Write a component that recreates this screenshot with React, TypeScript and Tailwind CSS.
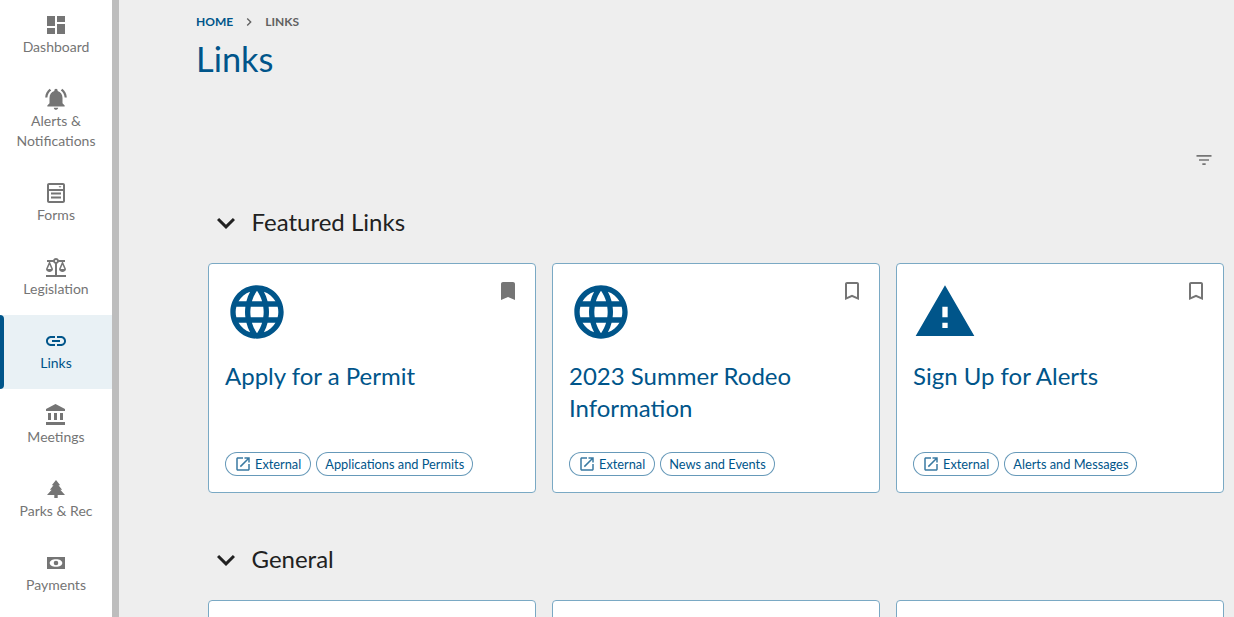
import React from "react";

const P = {
  dashboard: "M3 13h8V3H3v10zm0 8h8v-6H3v6zm10 0h8V11h-8v10zm0-18v6h8V3h-8z",
  bell: "M7.58 4.08L6.15 2.65C3.75 4.48 2.17 7.3 2.03 10.5h2c.15-2.65 1.51-4.97 3.55-6.42zm12.39 6.42h2c-.15-3.2-1.73-6.02-4.12-7.85l-1.42 1.43c2.02 1.45 3.39 3.77 3.54 6.42zM18 11c0-3.07-1.64-5.64-4.5-6.32V4c0-.83-.67-1.5-1.5-1.5s-1.5.67-1.5 1.5v.68C7.63 5.36 6 7.92 6 11v5l-2 2v1h16v-1l-2-2v-5zm-6 11c.14 0 .27-.01.4-.04.65-.14 1.18-.58 1.44-1.18.1-.24.15-.5.15-.78h-4c.01 1.1.9 2 2.01 2z",
  forms: "M5 2h14c1.1 0 2 .9 2 2v16c0 1.1-.9 2-2 2H5c-1.1 0-2-.9-2-2V4c0-1.1.9-2 2-2zm0 2v4h14V4H5zm0 6v10h14V10H5zm2 1.5h10v2H7v-2zm0 4h10v2H7v-2zM14.5 5.2h3l-1.5 1.6z",
  balance: "M13 8.83c.85-.3 1.53-.98 1.83-1.83H18l-3 7c0 1.66 1.57 3 3.5 3s3.5-1.34 3.5-3l-3-7h2V5h-6.17c-.41-1.17-1.52-2-2.83-2s-2.42.83-2.83 2H3v2h2l-3 7c0 1.66 1.57 3 3.5 3S9 15.66 9 14L6 7h3.17c.3.85.98 1.53 1.83 1.83V20H2v2h20v-2h-9V8.83zM20.37 14h-3.74l1.87-4.36L20.37 14zm-13 0H3.63L5.5 9.64 7.37 14zM12 7c-.55 0-1-.45-1-1 0-.55.45-1 1-1s1 .45 1 1c0 .55-.45 1-1 1z",
  link: "M3.9 12c0-1.71 1.39-3.1 3.1-3.1h4V7H7c-2.76 0-5 2.24-5 5s2.24 5 5 5h4v-1.9H7c-1.71 0-3.1-1.39-3.1-3.1zM8 13h8v-2H8v2zm9-6h-4v1.9h4c1.71 0 3.1 1.39 3.1 3.1s-1.39 3.1-3.1 3.1h-4V17h4c2.76 0 5-2.24 5-5s-2.24-5-5-5z",
  bank: "M4 10v7h3v-7H4zm6 0v7h3v-7h-3zM2 22h19v-3H2v3zm14-12v7h3v-7h-3zm-4.5-9L2 6v2h19V6l-9.5-5z",
  tree: "M12 3l4.2 5.2h-1.7l3.6 4.6h-1.8L21 18h-7.3v3h-3.4v-3H3l4.7-5.2H5.9l3.6-4.6H7.8z",
  money: "M3 6h18v12H3V6zm9 2.2c-3.6 0-6.3 1.6-6.3 3.8s2.7 3.8 6.3 3.8 6.3-1.6 6.3-3.8-2.7-3.8-6.3-3.8zM12 9.7a2.3 2.3 0 1 1 0 4.6 2.3 2.3 0 0 1 0-4.6z",
  globe: "M11.99 2C6.47 2 2 6.48 2 12s4.47 10 9.99 10C17.52 22 22 17.52 22 12S17.52 2 11.99 2zm6.93 6h-2.95c-.32-1.25-.78-2.45-1.38-3.56 1.84.63 3.37 1.91 4.33 3.56zM12 4.04c.83 1.2 1.48 2.53 1.91 3.96h-3.82c.43-1.43 1.08-2.76 1.91-3.96zM4.26 14C4.1 13.36 4 12.69 4 12s.1-1.36.26-2h3.38c-.08.66-.14 1.32-.14 2 0 .68.06 1.34.14 2H4.26zm.82 2h2.95c.32 1.25.78 2.45 1.38 3.56-1.84-.63-3.37-1.9-4.33-3.56zm2.95-8H5.08c.96-1.66 2.49-2.93 4.33-3.56C8.81 5.55 8.35 6.75 8.03 8zM12 19.96c-.83-1.2-1.48-2.53-1.91-3.96h3.82c-.43 1.43-1.08 2.76-1.91 3.96zM14.34 14H9.66c-.09-.66-.16-1.32-.16-2 0-.68.07-1.35.16-2h4.68c.09.65.16 1.32.16 2 0 .68-.07 1.34-.16 2zm.25 5.56c.6-1.11 1.06-2.31 1.38-3.56h2.95c-.96 1.65-2.49 2.93-4.33 3.56zM16.36 14c.08-.66.14-1.32.14-2 0-.68-.06-1.34-.14-2h3.38c.16.64.26 1.31.26 2s-.1 1.36-.26 2h-3.38z",
  warning: "M1 21h22L12 2 1 21zm12-3h-2v-2h2v2zm0-4h-2v-4h2v4z",
  bookmark: "M17 3H7c-1.1 0-1.99.9-1.99 2L5 21l7-3 7 3V5c0-1.1-.9-2-2-2z",
  bookmarkO: "M17 3H7c-1.1 0-2 .9-2 2v16l7-3 7 3V5c0-1.1-.9-2-2-2zm0 15l-5-2.18L7 18V5h10v13z",
  external: "M19 19H5V5h7V3H5c-1.11 0-2 .9-2 2v14c0 1.1.89 2 2 2h14c1.1 0 2-.9 2-2v-7h-2v7zM14 3v2h3.59l-9.83 9.83 1.41 1.41L19 6.41V10h2V3h-7z",
  filter: "M10 18h4v-2h-4v2zM3 6v2h18V6H3zm3 7h12v-2H6v2z",
  expand: "M16.59 8.59L12 13.17 7.41 8.59 6 10l6 6 6-6z",
  chevron: "M10 6L8.59 7.41 13.17 12l-4.58 4.59L10 18l6-6z",
};

function Icon({ d, className }: { d: string; className: string }) {
  return (
    <svg viewBox="0 0 24 24" fill="currentColor" fillRule="evenodd" className={className}>
      <path d={d} />
    </svg>
  );
}

const nav = [
  { icon: P.dashboard, label: ["Dashboard"] },
  { icon: P.bell, label: ["Alerts &", "Notifications"], large: true },
  { icon: P.forms, label: ["Forms"] },
  { icon: P.balance, label: ["Legislation"] },
  { icon: P.link, label: ["Links"], active: true },
  { icon: P.bank, label: ["Meetings"] },
  { icon: P.tree, label: ["Parks & Rec"] },
  { icon: P.money, label: ["Payments"] },
];

const cards = [
  { icon: P.globe, title: "Apply for a Permit", tag: "Applications and Permits", saved: true },
  { icon: P.globe, title: "2023 Summer Rodeo Information", tag: "News and Events" },
  { icon: P.warning, title: "Sign Up for Alerts", tag: "Alerts and Messages" },
];

function LinkCard({ c }: { c: (typeof cards)[number] }) {
  return (
    <div className="relative flex h-[230px] flex-col rounded-[4px] border border-[#7aa9c4] bg-white p-4">
      <button className="absolute right-[15px] top-[15px] text-[#757575]">
        <Icon d={c.saved ? P.bookmark : P.bookmarkO} className="h-6 w-6" />
      </button>
      <Icon d={c.icon} className="h-16 w-16 shrink-0 text-[#00558a]" />
      <div className="mt-4 pr-6 text-2xl leading-8 text-[#00558a]">{c.title}</div>
      <div className="mt-auto flex gap-[5px]">
        <span className="flex h-6 items-center rounded-full border border-[#00558a]/60 bg-white pl-2 pr-[9px] text-[12.8px] leading-none text-[#00558a]">
          <Icon d={P.external} className="mr-[3px] h-[18px] w-[18px] text-[#3a7aa2]" />
          External
        </span>
        <span className="flex h-6 items-center rounded-full border border-[#00558a]/60 bg-white px-2 text-[12.8px] leading-none text-[#00558a]">
          {c.tag}
        </span>
      </div>
    </div>
  );
}

function Section({ title, children }: { title: string; children: React.ReactNode }) {
  return (
    <section className="mb-[49px]">
      <div className="mb-[22px] flex h-9 items-center gap-[7.5px] text-[#212121]">
        <Icon d={P.expand} className="h-9 w-9" />
        <h2 className="-mt-0.5 text-2xl">{title}</h2>
      </div>
      <div className="grid grid-cols-[repeat(3,328px)] gap-4">{children}</div>
    </section>
  );
}

export default function App() {
  return (
    <div className="flex h-[617px] w-[1234px] overflow-hidden bg-[#eeeeee] font-[Lato,sans-serif]">
      <nav className="-mt-px flex w-[119px] shrink-0 flex-col border-r-[7px] border-[#bdbdbd] bg-white">
        {nav.map((n) => (
          <a
            key={n.label[0]}
            className={`relative flex flex-col items-center pb-4 pt-[14px] text-center text-sm leading-5 ${
              n.active ? "bg-[#e9f1f5] text-[#00558a]" : "text-[#757575]"
            }`}
          >
            {n.active && <span className="absolute inset-y-0 left-0 w-1 rounded-r-[4px] bg-[#00558a]" />}
            <Icon d={n.icon} className={n.large ? "-m-px h-[26px] w-[26px]" : "h-6 w-6"} />
            {n.label.map((l) => (
              <span key={l}>{l}</span>
            ))}
          </a>
        ))}
      </nav>
      <main className="min-w-0 flex-1 pl-[77px]">
        <div className="mt-[14px] flex h-4 items-center text-xs font-bold uppercase">
          <span className="text-[#00558a]">Home</span>
          <Icon d={P.chevron} className="mx-2 h-4 w-4 text-[#616161]" />
          <span className="text-[#616161]">Links</span>
        </div>
        <h1 className="mt-[7px] h-11 text-[34.4px] leading-11 text-[#00558a]">Links</h1>
        <div className="mt-[69px] flex justify-end pr-5">
          <Icon d={P.filter} className="h-5 w-5 text-[#757575]" />
        </div>
        <div className="ml-3 mt-[35px]">
          <Section title="Featured Links">
            {cards.map((c) => (
              <LinkCard key={c.title} c={c} />
            ))}
          </Section>
          <Section title="General">
            <div className="h-[230px] rounded-[4px] border border-[#7aa9c4] bg-white" />
            <div className="h-[230px] rounded-[4px] border border-[#7aa9c4] bg-white" />
            <div className="h-[230px] rounded-[4px] border border-[#7aa9c4] bg-white" />
          </Section>
        </div>
      </main>
    </div>
  );
}
